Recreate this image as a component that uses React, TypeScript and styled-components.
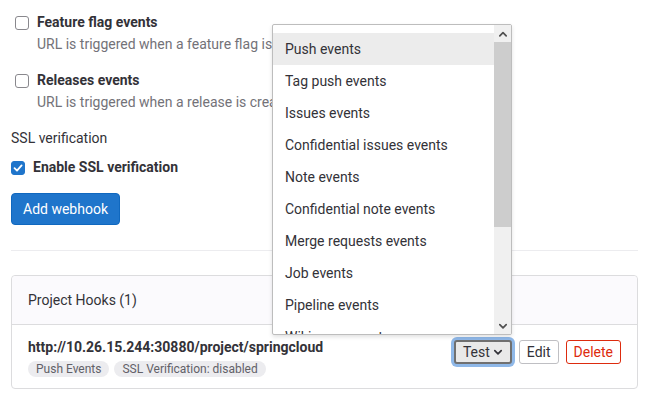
import styled, { createGlobalStyle } from "styled-components";

const GlobalStyle = createGlobalStyle`
  html, body {
    margin: 0;
    padding: 0;
    background: #fff;
  }
  body {
    font-family: Roboto, "Liberation Sans", sans-serif;
    font-size: 14px;
    color: #333238;
  }
`;

const Page = styled.div`
  position: relative;
  width: 648px;
  height: 401px;
  overflow: hidden;
  box-sizing: border-box;
  padding: 12px 10px 0 11px;
`;

const Option = styled.div`
  display: grid;
  grid-template-columns: 14px 1fr;
  column-gap: 8px;
  padding-left: 4px;
  margin-bottom: 16px;
`;

const Box = styled.span<{ $checked?: boolean }>`
  width: 14px;
  height: 14px;
  box-sizing: border-box;
  margin-top: 4px;
  border-radius: 3px;
  border: 1px solid ${(p) => (p.$checked ? "#1f75cb" : "#89888d")};
  background: ${(p) => (p.$checked ? "#1f75cb" : "#fff")};
  display: flex;
  align-items: center;
  justify-content: center;
  flex-shrink: 0;
`;

const Label = styled.div`
  font-weight: 700;
  line-height: 20px;
  color: #333238;
`;

const Help = styled.div`
  grid-column: 2;
  margin-top: 2px;
  line-height: 20px;
  color: #737278;
  white-space: nowrap;
`;

const SectionLabel = styled.div`
  line-height: 20px;
`;

const CheckRow = styled.div`
  display: flex;
  gap: 8px;
  margin-top: 9px;
`;

const PrimaryButton = styled.button`
  display: block;
  margin-top: 16px;
  height: 32px;
  padding: 0 11px;
  border: 1px solid #1068bf;
  border-radius: 4px;
  background: #1f75cb;
  color: #fff;
  font: inherit;
`;

const Divider = styled.hr`
  border: 0;
  border-top: 1px solid #ececef;
  margin: 25px 0 24px;
`;

const Card = styled.section`
  border: 1px solid #dcdcde;
  border-radius: 4px;
`;

const CardHeader = styled.header`
  background: #fbfafd;
  border-bottom: 1px solid #dcdcde;
  border-radius: 4px 4px 0 0;
  padding: 0 16px;
  height: 48px;
  display: flex;
  align-items: center;
`;

const HookRow = styled.div`
  display: flex;
  justify-content: space-between;
  align-items: flex-start;
  padding: 12px 16px 11px;
`;

const HookUrl = styled.div`
  font-weight: 700;
  line-height: 20px;
`;

const Badges = styled.div`
  display: flex;
  gap: 5px;
  margin-top: 4px;
`;

const Badge = styled.span`
  background: #ececef;
  color: #626168;
  border-radius: 8px;
  padding: 0 8px;
  font-size: 12px;
  line-height: 16px;
`;

const Actions = styled.div`
  display: flex;
  align-items: center;
  gap: 7px;
  margin-top: 3px;
`;

const Btn = styled.button<{ $tone?: "danger" | "active" }>`
  height: 24px;
  box-sizing: border-box;
  padding: 0 7px;
  border-radius: 3px;
  font: inherit;
  display: inline-flex;
  align-items: center;
  gap: 3px;
  background: ${(p) => (p.$tone === "active" ? "#e9e9e9" : "#fff")};
  color: ${(p) => (p.$tone === "danger" ? "#dd2b0e" : "#333238")};
  border: ${(p) =>
    p.$tone === "danger"
      ? "1px solid #dd2b0e"
      : p.$tone === "active"
      ? "2px solid #707070"
      : "1px solid #bfbfc3"};
  box-shadow: ${(p) => (p.$tone === "active" ? "0 0 0 3px #8fb8e8" : "none")};
`;

const Dropdown = styled.div`
  position: absolute;
  left: 272px;
  top: 24px;
  width: 240px;
  height: 311px;
  box-sizing: border-box;
  border: 1px solid #bdbdbd;
  border-radius: 2px;
  background: #fff;
  box-shadow: 0 2px 4px rgba(0, 0, 0, 0.12);
  display: flex;
  overflow: hidden;
`;

const List = styled.ul`
  list-style: none;
  margin: 0;
  padding: 8px 0 0;
  flex: 1;
  overflow: hidden;
`;

const Item = styled.li<{ $active?: boolean }>`
  height: 32px;
  line-height: 33px;
  padding: 0 12px;
  background: ${(p) => (p.$active ? "#ececec" : "transparent")};
  white-space: nowrap;
`;

const Scrollbar = styled.div`
  width: 17px;
  background: #f0f0f0;
  display: flex;
  flex-direction: column;
`;

const ScrollArrow = styled.div`
  height: 17px;
  display: flex;
  align-items: center;
  justify-content: center;
`;

const Track = styled.div`
  flex: 1;
`;

const Thumb = styled.div`
  height: 185px;
  background: #cdcdcd;
`;

const Chevron = ({ up, size = 10, color = "#505050" }: { up?: boolean; size?: number; color?: string }) => (
  <svg width={size} height={size} viewBox="0 0 10 10" fill="none">
    <path
      d={up ? "M1.8 6.8 L5 3.6 L8.2 6.8" : "M1.8 3.6 L5 6.8 L8.2 3.6"}
      stroke={color}
      strokeWidth="1.7"
      strokeLinecap="round"
      strokeLinejoin="round"
    />
  </svg>
);

const Check = () => (
  <svg width="10" height="10" viewBox="0 0 10 10" fill="none">
    <path d="M1.5 5.2 L4 7.6 L8.6 2.4" stroke="#fff" strokeWidth="1.8" strokeLinecap="round" strokeLinejoin="round" />
  </svg>
);

const events = [
  "Push events",
  "Tag push events",
  "Issues events",
  "Confidential issues events",
  "Note events",
  "Confidential note events",
  "Merge requests events",
  "Job events",
  "Pipeline events",
  "Wiki page events",
];

export default function App() {
  return (
    <>
      <GlobalStyle />
      <Page>
        <Option>
          <Box />
          <Label>Feature flag events</Label>
          <Help>URL is triggered when a feature flag is turned on or off</Help>
        </Option>
        <Option>
          <Box />
          <Label>Releases events</Label>
          <Help>URL is triggered when a release is created/updated</Help>
        </Option>
        <SectionLabel>SSL verification</SectionLabel>
        <CheckRow>
          <Box $checked>
            <Check />
          </Box>
          <Label>Enable SSL verification</Label>
        </CheckRow>
        <PrimaryButton>Add webhook</PrimaryButton>
        <Divider />
        <Card>
          <CardHeader>Project Hooks (1)</CardHeader>
          <HookRow>
            <div>
              <HookUrl>http://10.26.15.244:30880/project/springcloud</HookUrl>
              <Badges>
                <Badge>Push Events</Badge>
                <Badge>SSL Verification: disabled</Badge>
              </Badges>
            </div>
            <Actions>
              <Btn $tone="active">
                Test <Chevron size={10} color="#333238" />
              </Btn>
              <Btn>Edit</Btn>
              <Btn $tone="danger">Delete</Btn>
            </Actions>
          </HookRow>
        </Card>
        <Dropdown>
          <List>
            {events.map((e, i) => (
              <Item key={e} $active={i === 0}>
                {e}
              </Item>
            ))}
          </List>
          <Scrollbar>
            <ScrollArrow>
              <Chevron up />
            </ScrollArrow>
            <Track>
              <Thumb />
            </Track>
            <ScrollArrow>
              <Chevron />
            </ScrollArrow>
          </Scrollbar>
        </Dropdown>
      </Page>
    </>
  );
}
